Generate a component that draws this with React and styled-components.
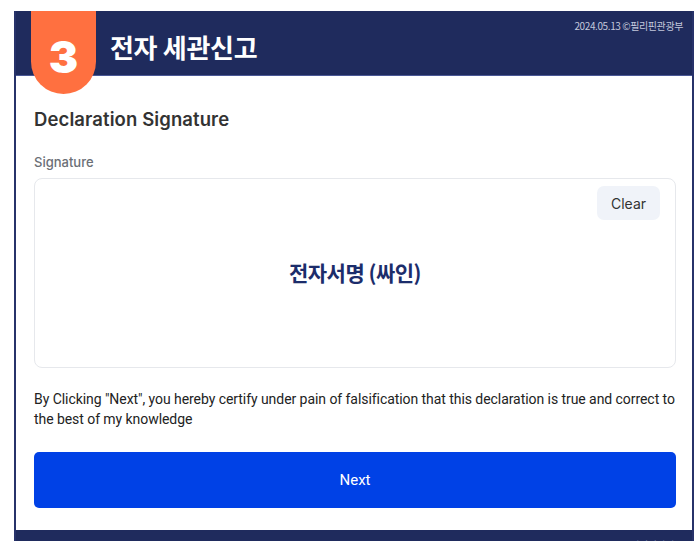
import styled, { createGlobalStyle } from 'styled-components';

const GlobalStyle = createGlobalStyle`
  * { box-sizing: border-box; }
  html, body { margin: 0; padding: 0; background: #fff; }
  body { font-family: Inter, "Noto Sans CJK KR", sans-serif; }
`;

function App() {
  return (
    <>
      <GlobalStyle />
      <Page>
        <Frame>
          <Header>
            <Badge>3</Badge>
            <Title>전자 세관신고</Title>
            <Stamp>2024.05.13 ©필리핀관광부</Stamp>
          </Header>
          <Body>
            <Heading>Declaration Signature</Heading>
            <Field>
              <Label>Signature</Label>
              <SignBox>
                <Toolbar>
                  <ClearButton>Clear</ClearButton>
                </Toolbar>
                <Placeholder>전자서명 (싸인)</Placeholder>
              </SignBox>
            </Field>
            <Notice>
              By Clicking "Next", you hereby certify under pain of falsification that this declaration is true and correct to the best of my knowledge
            </Notice>
            <NextButton>Next</NextButton>
          </Body>
          <Footer>
            <Stamp $faded>2024.05.13 ©필리핀관광부</Stamp>
          </Footer>
        </Frame>
      </Page>
    </>
  );
}
export default App;

const Page = styled.div`
  padding: 11px 0 0 14px;
  height: 541px;
  overflow: hidden;
`;

const Frame = styled.div`
  width: 680px;
  border-left: 2px solid #27326a;
  border-right: 2px solid #27326a;
  background: #fff;
`;

const Header = styled.div`
  position: relative;
  display: flex;
  align-items: center;
  height: 65px;
  padding: 0 9px 0 94px;
  background: #1f2b5d;
  border-bottom: 1px solid #4a5896;
`;

const Badge = styled.div`
  position: absolute;
  left: 15px;
  top: 0;
  width: 65px;
  height: 83px;
  display: flex;
  align-items: center;
  justify-content: center;
  padding-top: 8px;
  border-radius: 0 0 33px 33px;
  background: #ff7040;
  color: #fff;
  font-family: Inter, "Liberation Sans", sans-serif;
  font-weight: 900;
  font-size: 44px;
`;

const Title = styled.h1`
  margin: 6px 0 0;
  font-family: "Noto Sans CJK KR", sans-serif;
  font-size: 26px;
  font-weight: 700;
  color: #fff;
  letter-spacing: -0.3px;
`;

const Stamp = styled.span`
  margin-left: auto;
  align-self: flex-start;
  padding-top: 9px;
  font-family: "Noto Sans CJK KR", sans-serif;
  font-size: 10px;
  line-height: 12px;
  letter-spacing: -0.4px;
  color: ${p => (p.$faded ? '#6b7499' : '#c3c8dc')};
`;

const Body = styled.div`
  display: flex;
  flex-direction: column;
  padding: 31px 16px 22px 18px;
`;

const Heading = styled.h2`
  margin: 0;
  font-size: 18.5px;
  line-height: 24px;
  font-weight: 600;
  color: #333;
  letter-spacing: 0.1px;
`;

const Field = styled.div`
  display: flex;
  flex-direction: column;
  gap: 7px;
  margin-top: 22px;
`;

const Label = styled.div`
  font-size: 13px;
  line-height: 18px;
  font-weight: 500;
  color: #6b6f76;
`;

const SignBox = styled.div`
  display: flex;
  flex-direction: column;
  height: 190px;
  padding: 7px 15px 0;
  border: 1px solid #e6e8ec;
  border-radius: 8px;
`;

const Toolbar = styled.div`
  display: flex;
  justify-content: flex-end;
`;

const ClearButton = styled.button`
  width: 63px;
  height: 34px;
  border: none;
  border-radius: 7px;
  background: #f0f3f9;
  font-family: Inter, sans-serif;
  font-size: 14px;
  color: #333;
`;

const Placeholder = styled.div`
  margin-top: 37px;
  text-align: center;
  font-family: "Noto Sans CJK KR", sans-serif;
  font-size: 21px;
  line-height: 30px;
  font-weight: 700;
  color: #1c2d6b;
  letter-spacing: -0.5px;
`;

const Notice = styled.p`
  margin: 21px 0 0;
  font-family: Roboto, "Noto Sans CJK KR", sans-serif;
  font-size: 14px;
  line-height: 20px;
  letter-spacing: -0.06px;
  color: #222;
`;

const NextButton = styled.button`
  display: block;
  width: 100%;
  height: 56px;
  margin-top: 23px;
  border: none;
  border-radius: 5px;
  background: #0041e6;
  color: #fff;
  font-family: Roboto, sans-serif;
  font-size: 15px;
`;

const Footer = styled.div`
  display: flex;
  height: 40px;
  padding-right: 9px;
  background: #1f2b5d;
`;
